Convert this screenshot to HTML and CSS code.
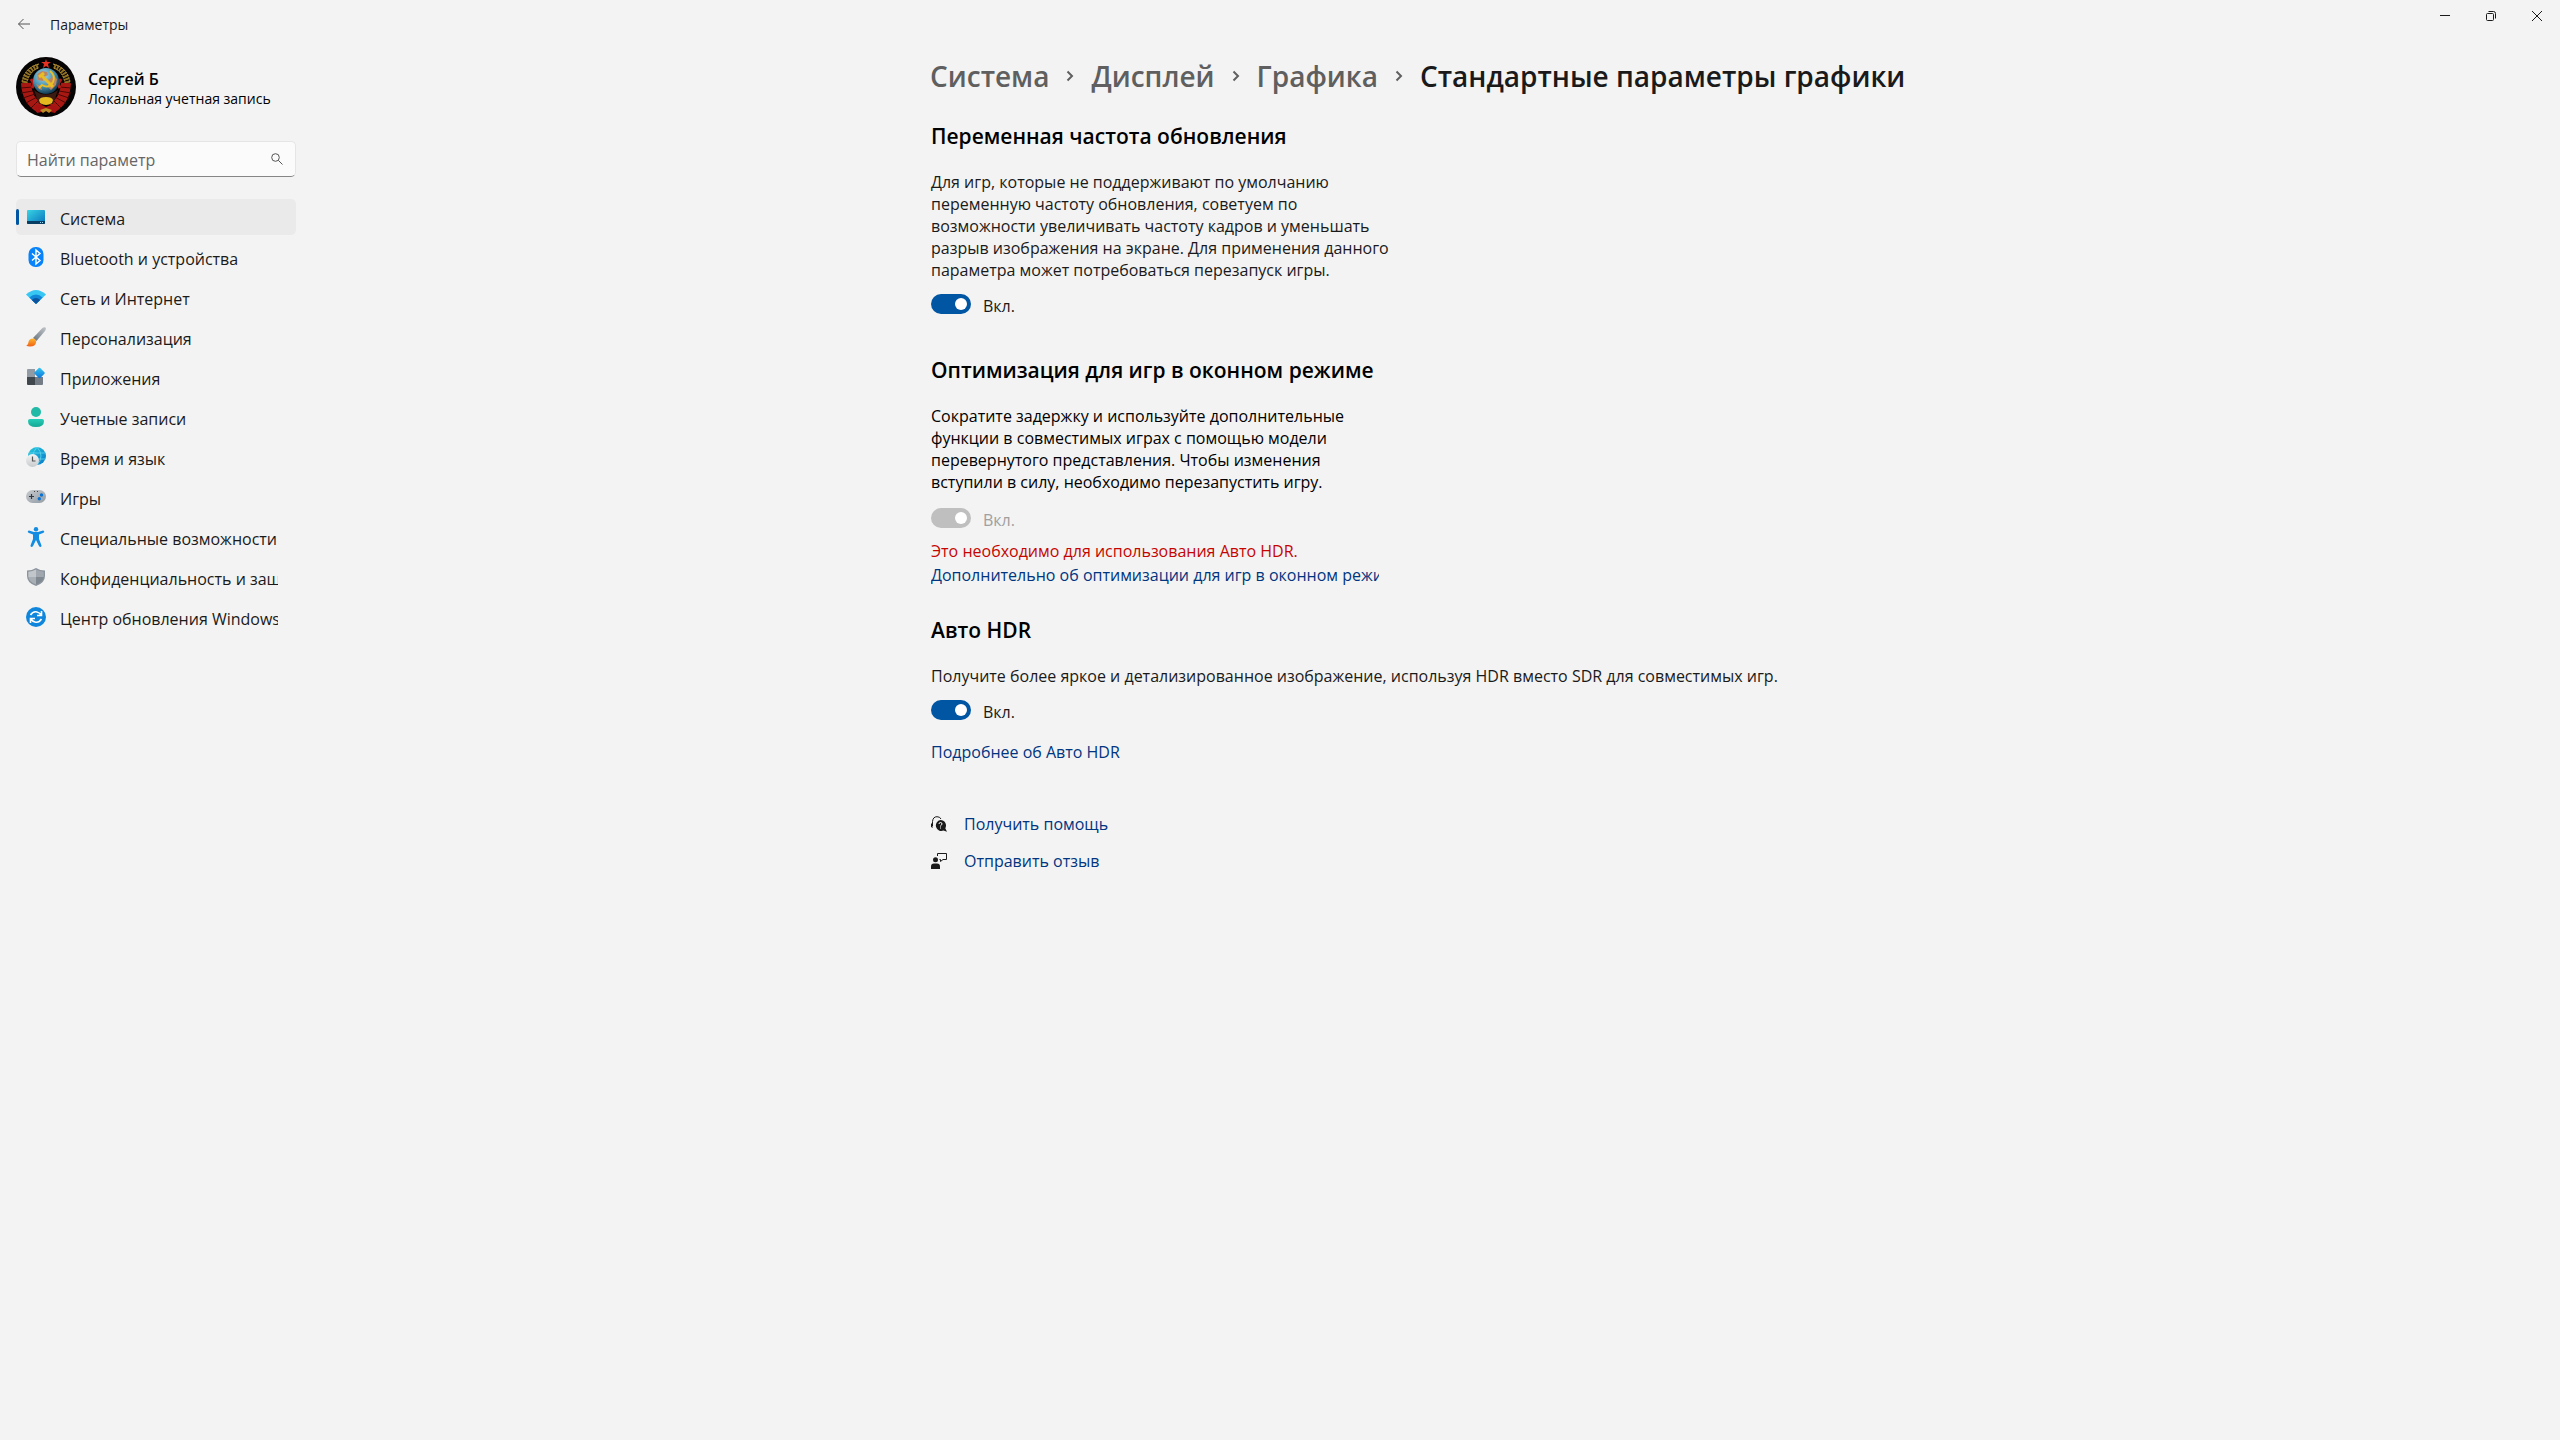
FILE: index.html
```html
<!DOCTYPE html>
<html lang="ru">
<head>
    <meta charset="UTF-8">
    <meta name="viewport" content="width=device-width, initial-scale=1.0">
    <title>Параметры</title>
    <link rel="stylesheet" href="styles.css">
</head>
<body>
    <header class="titlebar">
        <button class="back" aria-label="Назад">
            <svg width="14" height="14" viewBox="0 0 14 14" fill="none" stroke="#555"><path d="M13 7H1.5M6.5 2l-5 5 5 5"/></svg>
        </button>
        <span class="app-title">Параметры</span>
        <div class="window-buttons">
            <button aria-label="Свернуть">
                <svg width="12" height="12" viewBox="0 0 12 12" fill="none" stroke="#1a1a1a"><path d="M1 5.5h10"/></svg>
            </button>
            <button aria-label="Восстановить">
                <svg width="12" height="12" viewBox="0 0 12 12" fill="none" stroke="#1a1a1a"><rect x="1.5" y="3.5" width="7" height="7" rx="1"/><path d="M3.5 1.5h5a2 2 0 0 1 2 2v5"/></svg>
            </button>
            <button aria-label="Закрыть">
                <svg width="12" height="12" viewBox="0 0 12 12" fill="none" stroke="#1a1a1a"><path d="M1 1l10 10M11 1L1 11"/></svg>
            </button>
        </div>
    </header>

    <div class="layout">
        <aside class="sidebar">
            <div class="profile">
                <svg class="avatar" viewBox="0 0 60 60">
                    <defs>
                        <radialGradient id="globe" cx="40%" cy="30%" r="70%">
                            <stop offset="0" stop-color="#a5d5e6"/>
                            <stop offset=".6" stop-color="#4790ae"/>
                            <stop offset="1" stop-color="#153c52"/>
                        </radialGradient>
                    </defs>
                    <circle cx="30" cy="30" r="30" fill="#050303"/>
                    <!-- wheat -->
                    <g fill="none" stroke="#8d6e22" stroke-width="5" stroke-dasharray="2 1">
                        <path d="M22 9Q10 13 8 28"/>
                        <path d="M38 9q12 4 14 19"/>
                    </g>
                    <g fill="none" stroke="#c09a3c" stroke-dasharray="2 1">
                        <path d="M23 7Q8 11 6 25M22 11q-9 4-11 15M37 7q15 4 17 18M38 11q9 4 11 15"/>
                    </g>
                    <!-- ribbons -->
                    <g fill="none" stroke="#a81813" stroke-width="10">
                        <path d="M10 26q1 18 14 25"/>
                        <path d="M50 26q-1 18-14 25"/>
                    </g>
                    <g stroke="#4c0705" stroke-width="1">
                        <path d="M5 31l11-1M5 36l12-2M7 41l12-4M10 46l11-6M15 51l8-8M55 31l-11-1M55 36l-12-2M53 41l-12-4M50 46l-11-6M45 51l-8-8"/>
                    </g>
                    <path d="M15 22l3 5-2 4M45 22l-3 5 2 4" fill="none" stroke="#b31a16" stroke-width="3"/>
                    <path d="M18 33q12 9 24 0l-5 14H23z" fill="#3b1a11"/>
                    <circle cx="30" cy="24" r="13" fill="url(#globe)"/>
                    <path d="M21 17l5-3 5 1 1 3-4 2-1 4-5-1zM32 23l6-4 3 3-1 6-5 5-3-3zM20 27l5 2 1 4-3-1z" fill="#bd8461"/>
                    <g fill="none" stroke="#e8bd25" stroke-width="2">
                        <path d="M34 14q6 5 3 11-4 7-11 3l-3 3"/>
                        <path d="M23 20l5-4M25 18l12 12" stroke-width="3"/>
                    </g>
                    <path d="M23 43q1-3 7-3t7 3l-1 3q-6 4-12 0z" fill="#e3b91f"/>
                    <path d="M18 49q6-3 12 1 6-4 12 1l-3 5-9-2-9 2z" fill="#a51412"/>
                    <path d="M24 53l6-2 6 2-3 3-3-2-3 2z" fill="#bd8b25"/>
                    <path d="M30 2l1 3h4l-3 2 1 4-3-2-3 2 1-4-3-2h4z" fill="#e33122"/>
                </svg>
                <div class="user">
                    <div class="name">Сергей Б</div>
                    <div class="account">Локальная учетная запись</div>
                </div>
            </div>

            <div class="search">
                <input type="search" placeholder="Найти параметр" aria-label="Найти параметр">
                <svg width="12" height="12" viewBox="0 0 12 12" fill="none" stroke="#555"><circle cx="4.5" cy="4.5" r="3.8"/><path d="M7.3 7.3L11.5 11.5"/></svg>
            </div>

            <nav class="menu">
                <a class="active" href="#">
                    <svg viewBox="0 0 20 20">
                        <defs><linearGradient id="screen" x2="1" y2="1"><stop stop-color="#38d4e4"/><stop offset="1" stop-color="#0872bd"/></linearGradient></defs>
                        <rect x="1" y="3" width="18" height="14" rx="1" fill="url(#screen)"/>
                        <path d="M1 14h18v2a1 1 0 0 1-1 1H2a1 1 0 0 1-1-1z" fill="#083d63"/>
                        <path d="M14 15h1v1h-1zM16 15h1v1h-1z" fill="#9bdcf2"/>
                    </svg>
                    <span>Система</span>
                </a>
                <a href="#">
                    <svg viewBox="0 0 20 20">
                        <rect x="2.5" width="15" height="20" rx="7" fill="#0883fa"/>
                        <path d="M6 6.5l8 7-4 3.5V3l4 3.5-8 7" fill="none" stroke="#fff" stroke-width="1.4"/>
                    </svg>
                    <span>Bluetooth и устройства</span>
                </a>
                <a href="#">
                    <svg viewBox="0 0 20 20">
                        <path d="M0 7.5Q10-1.5 20 7.5L10 17z" fill="#38c7f3"/>
                        <path d="M3.3 10.6Q10 4.5 16.7 10.6L10 17z" fill="#1287d8"/>
                        <path d="M5.8 13Q10 9 14.2 13L10 17z" fill="#0b539c"/>
                    </svg>
                    <span>Сеть и Интернет</span>
                </a>
                <a href="#">
                    <svg viewBox="0 0 20 20">
                        <defs>
                            <linearGradient id="handle" x1="1" x2="0" y2="1"><stop stop-color="#c1c6cb"/><stop offset="1" stop-color="#67717b"/></linearGradient>
                            <linearGradient id="bristle" x2="0" y2="1"><stop stop-color="#ffb52d"/><stop offset="1" stop-color="#ee6117"/></linearGradient>
                        </defs>
                        <path d="M7 11L16 1.5Q18-.5 19.5.5q1 1.5-.5 3.5L10.5 14z" fill="url(#handle)"/>
                        <path d="M7 11.5q3 .2 3.2 3.5-.7 4.5-6.2 4.5-2.5 0-4-1 2-.2 2.5-3.5.5-3.5 4.5-3.500z" fill="url(#bristle)"/>
                    </svg>
                    <span>Персонализация</span>
                </a>
                <a href="#">
                    <svg viewBox="0 0 20 20">
                        <defs><linearGradient id="tile" x2="1" y2="1"><stop stop-color="#35caf4"/><stop offset="1" stop-color="#0b70d7"/></linearGradient></defs>
                        <path d="M2 2h7v8H1V3a1 1 0 0 1 1-1z" fill="#929ba4"/>
                        <path d="M1 10h8v8H2a1 1 0 0 1-1-1z" fill="#40474d"/>
                        <path d="M9 10h8v7a1 1 0 0 1-1 1H9z" fill="#747d86"/>
                        <rect x="9.5" y="2" width="8" height="8" rx="1" transform="rotate(45 13.5 6)" fill="url(#tile)"/>
                    </svg>
                    <span>Приложения</span>
                </a>
                <a href="#">
                    <svg viewBox="0 0 20 20">
                        <defs><linearGradient id="person" x2="0" y2="1"><stop stop-color="#27cdb8"/><stop offset="1" stop-color="#16a893"/></linearGradient></defs>
                        <circle cx="10" cy="5" r="5" fill="#22b9a6"/>
                        <path d="M4 12h12q2 0 2 2 0 6-8 6t-8-6q0-2 2-2z" fill="url(#person)"/>
                    </svg>
                    <span>Учетные записи</span>
                </a>
                <a href="#">
                    <svg viewBox="0 0 20 20">
                        <defs>
                            <linearGradient id="earth" x2="1" y2="1"><stop stop-color="#28cddd"/><stop offset="1" stop-color="#0877c8"/></linearGradient>
                            <linearGradient id="clock" x2="0" y2="1"><stop stop-color="#f4f4f4"/><stop offset="1" stop-color="#c8cbcd"/></linearGradient>
                        </defs>
                        <circle cx="11" cy="9" r="9" fill="url(#earth)"/>
                        <path d="M3 6h16M3 12h16M11 0q-8 9 0 18M11 0q8 9 0 18" fill="none" stroke="#62d5f0" stroke-width=".8"/>
                        <circle cx="6.5" cy="13.5" r="6.5" fill="url(#clock)"/>
                        <path d="M6.5 9.5V14H9.5" fill="none" stroke="#555" stroke-width="1.2"/>
                    </svg>
                    <span>Время и язык</span>
                </a>
                <a href="#">
                    <svg viewBox="0 0 20 20">
                        <defs><linearGradient id="pad" x2="1" y2="1"><stop stop-color="#c6cace"/><stop offset="1" stop-color="#939ca5"/></linearGradient></defs>
                        <rect y="3" width="20" height="13" rx="6.5" fill="url(#pad)"/>
                        <path d="M3 9.5h5M5.5 7v5" stroke="#343a40" stroke-width="1.2"/>
                        <circle cx="15.5" cy="8" r="1.7" fill="#0873d1"/>
                        <circle cx="13.3" cy="11.8" r="1.7" fill="#0873d1"/>
                        <path d="M8 4h1v1H8zM11 4h1v1h-1z" fill="#444"/>
                    </svg>
                    <span>Игры</span>
                </a>
                <a href="#">
                    <svg viewBox="0 0 20 20" fill="#138ce2">
                        <circle cx="10" cy="2.2" r="2.2"/>
                        <path d="M3 3.5L8 5h4l5-1.5q1.5 0 1.2 1.5-.2.7-1.2 1L13 7.5V12l2.5 6.5q.1 1.3-1 1.5-1 0-1.5-1l-3-6-3 6q-.5 1-1.5 1-1.1-.2-1-1.5L7 12V7.5L3 6q-1-.3-1.2-1Q1.5 3.5 3 3.5z"/>
                    </svg>
                    <span>Специальные возможности</span>
                </a>
                <a href="#">
                    <svg viewBox="0 0 20 20">
                        <path d="M10 1q4 2.5 9 2.5V9q0 7-9 10-9-3-9-10V3.5Q6 3.5 10 1z" fill="#8b949d"/>
                        <path d="M10 2.5q-3.5 2-7.7 2.2V10H10z" fill="#c1c6ca"/>
                        <path d="M10 2.5q3.5 2 7.7 2.2V10H10z" fill="#a0a7ae"/>
                        <path d="M2.3 10H10v7.5Q3 15 2.3 10z" fill="#a8afb5"/>
                        <path d="M17.7 10H10v7.5q7-2.5 7.7-7.5z" fill="#7f8891"/>
                    </svg>
                    <span>Конфиденциальность и защита</span>
                </a>
                <a href="#">
                    <svg viewBox="0 0 20 20">
                        <circle cx="10" cy="10" r="10" fill="#0f86dc"/>
                        <g fill="none" stroke="#fff" stroke-width="1.6">
                            <path d="M4.5 8Q7 4 11 5q2.5.5 4 3M15.5 4v4.5H11"/>
                            <path d="M15.5 12q-2.5 4-6.5 3-2.5-.5-4-3M4.5 16v-4.5H9"/>
                        </g>
                    </svg>
                    <span>Центр обновления Windows</span>
                </a>
            </nav>
        </aside>

        <main>
            <div class="content">
                <h1 class="breadcrumb">
                    <a href="#">Система</a>
                    <svg viewBox="0 0 8 12"><path d="M1.5 1.5L6 6l-4.5 4.5"/></svg>
                    <a href="#">Дисплей</a>
                    <svg viewBox="0 0 8 12"><path d="M1.5 1.5L6 6l-4.5 4.5"/></svg>
                    <a href="#">Графика</a>
                    <svg viewBox="0 0 8 12"><path d="M1.5 1.5L6 6l-4.5 4.5"/></svg>
                    <span>Стандартные параметры графики</span>
                </h1>

                <section class="group">
                    <h2>Переменная частота обновления</h2>
                    <p>Для игр, которые не поддерживают по умолчанию<br>
                        переменную частоту обновления, советуем по<br>
                        возможности увеличивать частоту кадров и уменьшать<br>
                        разрыв изображения на экране. Для применения данного<br>
                        параметра может потребоваться перезапуск игры.</p>
                    <label class="toggle"><input type="checkbox" role="switch" checked><span>Вкл.</span></label>
                </section>

                <section class="group windowed">
                    <h2>Оптимизация для игр в оконном режиме</h2>
                    <p>Сократите задержку и используйте дополнительные<br>
                        функции в совместимых играх с помощью модели<br>
                        перевернутого представления. Чтобы изменения<br>
                        вступили в силу, необходимо перезапустить игру.</p>
                    <label class="toggle"><input type="checkbox" role="switch" checked disabled><span>Вкл.</span></label>
                    <div class="warning">Это необходимо для использования Авто HDR.</div>
                    <a class="link clipped" href="#">Дополнительно об оптимизации для игр в оконном режиме</a>
                </section>

                <section class="group">
                    <h2>Авто HDR</h2>
                    <p>Получите более яркое и детализированное изображение, используя HDR вместо SDR для совместимых игр.</p>
                    <label class="toggle"><input type="checkbox" role="switch" checked><span>Вкл.</span></label>
                    <a class="link more" href="#">Подробнее об Авто HDR</a>
                </section>

                <div class="help">
                    <a class="link" href="#">
                        <svg viewBox="0 0 16 16">
                            <path d="M1.5 10V5.5Q2 .7 6 .7q3 0 4 2.3M.5 7.5V11H2" fill="none" stroke="#1a1a1a"/>
                            <path d="M9.5 4a5.5 5.5 0 0 1 4.8 8.2l1.7 3.5-3.5-1.2A5.5 5.5 0 1 1 9.5 4z" fill="#1a1a1a"/>
                            <path d="M8 8q0-1.5 1.5-1.5T11 8q0 .8-1.5 1.8v.7M9.5 11.5v1" fill="none" stroke="#fff"/>
                        </svg>
                        Получить помощь
                    </a>
                    <a class="link" href="#">
                        <svg viewBox="0 0 16 16">
                            <circle cx="4.5" cy="6.7" r="2.5" fill="#1a1a1a"/>
                            <path d="M0 16v-2.5Q0 10.5 3 10.5h3q3 0 3 3V16z" fill="#1a1a1a"/>
                            <path d="M6.5 3V.5h9v6H12l-2.5 2v-2H8.5" fill="none" stroke="#1a1a1a"/>
                        </svg>
                        Отправить отзыв
                    </a>
                </div>
            </div>
        </main>
    </div>
</body>
</html>
```

FILE: styles.css
```css
* {
    box-sizing: border-box;
}
body {
    margin: 0;
    min-height: 100vh;
    background-color: #f3f3f3;
    color: #1a1a1a;
    font-family: "Open Sans", "Noto Sans", sans-serif;
    font-size: 16px;
    line-height: 22px;
}
a {
    color: inherit;
    text-decoration: none;
}
button {
    display: flex;
    align-items: center;
    justify-content: center;
    padding: 0;
    border: none;
    background: none;
}
svg {
    flex: none;
}

/* Title bar */
.titlebar {
    display: flex;
    align-items: center;
    height: 48px;
}
.back {
    width: 48px;
    height: 48px;
}
.app-title {
    font-size: 14px;
    padding: 2px 0 0 2px;
}
.window-buttons {
    display: flex;
    align-self: flex-start;
    margin-left: auto;
}
.window-buttons button {
    width: 46px;
    height: 32px;
}

.layout {
    display: flex;
}

/* Sidebar */
.sidebar {
    flex: none;
    width: 300px;
    padding: 9px 4px 0 16px;
}
.profile {
    display: flex;
    align-items: center;
    gap: 12px;
    color: #000;
}
.avatar {
    width: 60px;
    height: 60px;
}
.user {
    padding-top: 4px;
}
.name {
    font-weight: 600;
    line-height: 20px;
}
.account {
    font-size: 14px;
    line-height: 20px;
}
.search {
    position: relative;
    margin: 24px 0 22px;
}
.search input {
    display: block;
    width: 100%;
    height: 36px;
    padding: 1px 36px 0 10px;
    border: 1px solid #e5e5e5;
    border-bottom-color: #868686;
    border-radius: 5px;
    background-color: #fbfbfb;
    font: inherit;
}
.search input::placeholder {
    color: #666;
    opacity: 1;
}
.search svg {
    position: absolute;
    top: 12px;
    right: 13px;
}
.menu {
    display: flex;
    flex-direction: column;
    gap: 4px;
}
.menu a {
    position: relative;
    display: flex;
    align-items: center;
    gap: 14px;
    height: 36px;
    padding: 0 18px 0 10px;
    border-radius: 5px;
}
.menu svg {
    width: 20px;
    height: 20px;
}
.menu span {
    overflow: hidden;
    white-space: nowrap;
    padding-top: 3px;
}
.menu .active {
    background-color: #eaeaea;
}
.menu .active::before {
    content: "";
    position: absolute;
    left: 0;
    top: 10px;
    width: 3px;
    height: 16px;
    border-radius: 2px;
    background-color: #0056a3;
}

/* Page */
main {
    flex: 1;
}
.content {
    max-width: 1000px;
    margin: 0 auto;
}
.breadcrumb {
    display: flex;
    align-items: center;
    margin: 8px 0 26px;
    font-size: 28px;
    font-weight: 600;
    line-height: 40px;
    white-space: nowrap;
}
.breadcrumb a {
    color: #5f5f5f;
}
.breadcrumb svg {
    width: 8px;
    height: 12px;
    margin: 0 17px;
    fill: none;
    stroke: #5f5f5f;
    stroke-width: 2;
}
.group,
.help {
    display: flex;
    flex-direction: column;
    align-items: flex-start;
    padding-left: 1px;
}
.group {
    margin-bottom: 42px;
}
h2 {
    margin: 0 0 21px;
    color: #000;
    font-size: 21px;
    font-weight: 600;
    line-height: 28px;
}
p {
    margin: 0 0 13px;
}
.windowed {
    margin-bottom: 30px;
}
.windowed p {
    margin-bottom: 15px;
    color: #000;
}
.toggle {
    display: flex;
    align-items: center;
    gap: 12px;
    height: 20px;
}
.toggle input {
    appearance: none;
    width: 40px;
    height: 20px;
    margin: 0;
    padding: 4px;
    border-radius: 10px;
    background-color: #0056a3;
}
.toggle input::before {
    content: "";
    display: block;
    width: 12px;
    height: 12px;
    margin-left: auto;
    border-radius: 50%;
    background-color: #fff;
}
.toggle input:disabled {
    background-color: #bfbfbf;
}
.toggle input:disabled + span {
    color: #a0a0a0;
}
.toggle span {
    padding-top: 3px;
}
.warning {
    margin: 12px 0 2px;
    color: #c50500;
}
.link {
    color: #003580;
}
.clipped {
    width: 448px;
    overflow: hidden;
    white-space: nowrap;
}
.more {
    margin-top: 21px;
}
.help {
    gap: 15px;
    padding-top: 8px;
}
.help .link {
    display: flex;
    align-items: center;
    gap: 17px;
}
.help svg {
    width: 16px;
    height: 16px;
}
```
